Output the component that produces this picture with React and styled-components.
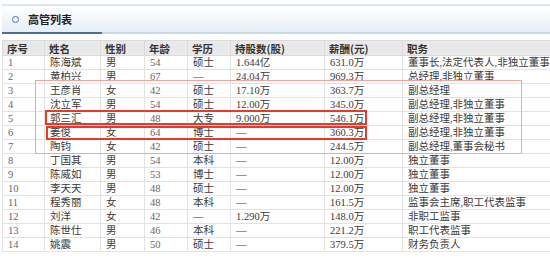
import styled, { createGlobalStyle } from "styled-components";

const GlobalStyle = createGlobalStyle`
  html, body {
    margin: 0;
    padding: 0;
    background: #fff;
  }
`;

const Page = styled.div`
  width: 550px;
  height: 258px;
  overflow: hidden;
  padding: 4px 0 0 2px;
  box-sizing: border-box;
  font-family: "Liberation Serif", "Noto Sans CJK SC", serif;
`;

const TitleBar = styled.div`
  height: 26px;
  display: flex;
  align-items: center;
  gap: 9px;
  padding-left: 10px;
  border-top: 2px solid #dce7f1;
  border-bottom: 2px solid #c9d8e6;
  background: linear-gradient(#ffffff, #e6edf5);
  position: relative;

  &::after {
    content: "";
    position: absolute;
    left: 0;
    bottom: -2px;
    width: 100px;
    height: 2px;
    background: #4b6f93;
  }
`;

const Dot = styled.span`
  width: 5px;
  height: 5px;
  border: 1.5px solid #3d73a8;
  border-radius: 50%;
`;

const Title = styled.h2`
  margin: 0;
  font-family: "Noto Sans CJK SC", sans-serif;
  font-size: 11px;
  font-weight: 700;
  color: #222;
`;

const TableWrap = styled.div`
  position: relative;
  margin-top: 6px;
`;

const Table = styled.table`
  width: 548px;
  border-collapse: collapse;
  table-layout: fixed;
`;

const Th = styled.th`
  height: 14px;
  padding: 0 0 0 4px;
  text-align: left;
  background: #e9e9e9;
  border: 1px solid #dadada;
  font-family: "Noto Sans CJK SC", sans-serif;
  font-size: 10.5px;
  font-weight: 700;
  color: #333;
  line-height: 13px;
  white-space: nowrap;
  overflow: hidden;
`;

const Td = styled.td`
  height: 13px;
  padding: 0 0 0 5px;
  border: 1px solid #e2e2e2;
  font-size: 10.5px;
  line-height: 13px;
  color: ${(p) => (p.$muted ? "#666" : "#3a3a3a")};
  white-space: nowrap;
  overflow: hidden;
`;

const Mark = styled.div`
  position: absolute;
  box-sizing: border-box;
  pointer-events: none;
  border: ${(p) => (p.$bold ? "2px solid #e8392a" : "1.5px solid #f3a49c")};
`;

const cols = [42, 56, 44, 43, 43, 94, 78, 148];
const heads = ["序号", "姓名", "性别", "年龄", "学历", "持股数(股)", "薪酬(元)", "职务"];

const rows = [
  ["1", "陈海斌", "男", "54", "硕士", "1.644亿", "631.0万", "董事长,法定代表人,非独立董事"],
  ["2", "黄柏兴", "男", "67", "—", "24.04万", "969.3万", "总经理,非独立董事"],
  ["3", "王彦肖", "女", "42", "硕士", "17.10万", "363.7万", "副总经理"],
  ["4", "沈立军", "男", "54", "硕士", "12.00万", "345.0万", "副总经理,非独立董事"],
  ["5", "郭三汇", "男", "48", "大专", "9.000万", "546.1万", "副总经理,非独立董事"],
  ["6", "姜俊", "女", "64", "博士", "—", "360.3万", "副总经理,非独立董事"],
  ["7", "陶钧", "女", "42", "硕士", "—", "244.5万", "副总经理,董事会秘书"],
  ["8", "丁国其", "男", "54", "本科", "—", "12.00万", "独立董事"],
  ["9", "陈威如", "男", "53", "博士", "—", "12.00万", "独立董事"],
  ["10", "李天天", "男", "48", "硕士", "—", "12.00万", "独立董事"],
  ["11", "程秀丽", "女", "48", "本科", "—", "161.5万", "监事会主席,职工代表监事"],
  ["12", "刘洋", "女", "42", "—", "1.290万", "148.0万", "非职工监事"],
  ["13", "陈世仕", "男", "46", "本科", "—", "221.2万", "职工代表监事"],
  ["14", "姚震", "男", "50", "硕士", "—", "379.5万", "财务负责人"],
];

// annotation boxes drawn over the table
const marks = [
  { left: 33, top: 40, width: 487, height: 74, bold: false },
  { left: 43, top: 70, width: 322, height: 15, bold: true },
  { left: 44, top: 86, width: 321, height: 14, bold: true },
];

export default function App() {
  return (
    <Page>
      <GlobalStyle />
      <TitleBar>
        <Dot />
        <Title>高管列表</Title>
      </TitleBar>
      <TableWrap>
        <Table>
          <colgroup>
            {cols.map((w, i) => (
              <col key={i} style={{ width: w }} />
            ))}
          </colgroup>
          <thead>
            <tr>
              {heads.map((h) => (
                <Th key={h}>{h}</Th>
              ))}
            </tr>
          </thead>
          <tbody>
            {rows.map((r) => (
              <tr key={r[0]}>
                {r.map((c, i) => (
                  <Td key={i} $muted={i === 0 || i === 3}>
                    {c}
                  </Td>
                ))}
              </tr>
            ))}
          </tbody>
        </Table>
        {marks.map((m, i) => (
          <Mark
            key={i}
            $bold={m.bold}
            style={{ left: m.left, top: m.top, width: m.width, height: m.height }}
          />
        ))}
      </TableWrap>
    </Page>
  );
}
